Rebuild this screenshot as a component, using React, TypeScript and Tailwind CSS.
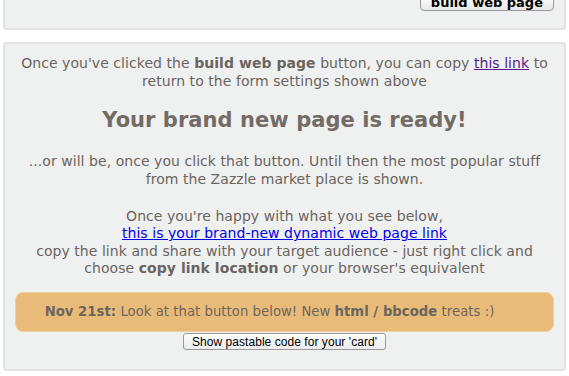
export default function App() {
  return (
    <div className="w-[569px] h-[376px] overflow-hidden bg-white text-[#6b655f]" style={{ fontFamily: "'DejaVu Sans', Verdana, sans-serif" }}>
      <div className="mx-[3px] -mt-[24px] h-[54px] rounded-[4px] border-2 border-[#e2e2e2] bg-[#eff0f0] flex justify-end pt-[16px] pr-[10px]">
        <button className="h-[17px] px-[10px] rounded-[4px] border border-[#9a9a9a] bg-gradient-to-b from-white to-[#e8e8e8] text-[13px] font-bold text-black leading-none">
          build web page
        </button>
      </div>
      <div className="mx-[3px] mt-[12px] h-[329px] rounded-[4px] border-2 border-[#e2e2e2] bg-[#eff0f0] px-[8px] pt-[11px] text-center text-[14px] leading-[17.5px] tracking-[0.05px]">
        <p>
          Once you've clicked the <b>build web page</b> button, you can copy{" "}
          <a href="#" className="underline text-[#551a8b]">this link</a> to
          <br />
          return to the form settings shown above
        </p>
        <h1 className="mt-[18px] text-[21px] font-bold text-[#736c66] leading-[24px]">Your brand new page is ready!</h1>
        <p className="mt-[21px]">
          ...or will be, once you click that button. Until then the most popular stuff
          <br />
          from the Zazzle market place is shown.
        </p>
        <p className="mt-[20px] leading-[17.3px]">
          Once you're happy with what you see below,
          <br />
          <a href="#" className="underline text-[#0000ee]">this is your brand-new dynamic web page link</a>
          <br />
          copy the link and share with your target audience - just right click and
          <br />
          choose <b>copy link location</b> or your browser's equivalent
        </p>
        <div className="mt-[15px] mx-[2px] h-[40px] rounded-[8px] border border-[#f0cf9c] bg-[#e9bb78] flex items-center justify-center pr-[30px] text-[13.2px]">
          <span>
            <b>Nov 21st:</b> Look at that button below! New <b>html / bbcode</b> treats :)
          </span>
        </div>
        <div className="mt-[1px] flex justify-center">
          <button className="h-[17px] px-[8px] rounded-[3px] border border-[#9a9a9a] bg-gradient-to-b from-white to-[#ececec] text-[12px] text-black leading-none" style={{ fontFamily: "'Liberation Sans', Arial, sans-serif" }}>
            Show pastable code for your 'card'
          </button>
        </div>
      </div>
    </div>
  );
}
